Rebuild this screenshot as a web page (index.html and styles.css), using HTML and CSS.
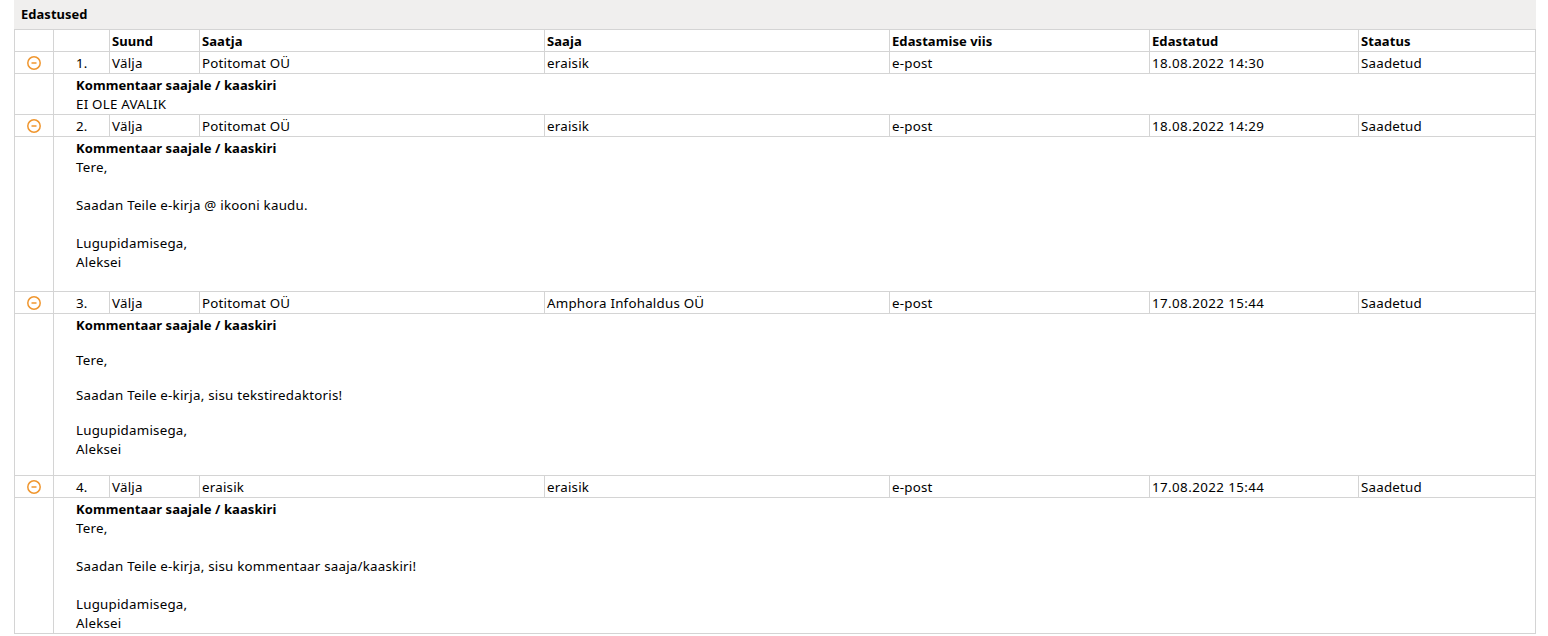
FILE: index.html
```html
<!DOCTYPE html>
<html lang="et">
<head>
<meta charset="utf-8">
<title>Edastused</title>
<link rel="stylesheet" href="styles.css">
</head>
<body>
<section class="panel">
<h2 class="panel-title">Edastused</h2>
<table class="grid">
<colgroup>
<col class="c-icon"><col class="c-num"><col class="c-dir"><col class="c-from"><col class="c-to"><col class="c-via"><col class="c-date"><col class="c-status">
</colgroup>
<thead>
<tr class="row"><th></th><th></th><th>Suund</th><th>Saatja</th><th>Saaja</th><th>Edastamise viis</th><th>Edastatud</th><th>Staatus</th></tr>
</thead>
<tbody>
<tr class="row">
<td class="icon"><svg class="minus" viewBox="0 0 14 14" width="14" height="14"><circle cx="7" cy="7" r="6.2"/><path d="M4.5 7h5"/></svg></td>
<td class="num">1.</td><td>Välja</td><td>Potitomat OÜ</td><td>eraisik</td><td>e-post</td><td class="date">18.08.2022 14:30</td><td>Saadetud</td>
</tr>
<tr class="detail"><td></td><td class="body" colspan="7"><b>Kommentaar saajale / kaaskiri</b><br>EI OLE AVALIK</td></tr>
<tr class="row">
<td class="icon"><svg class="minus" viewBox="0 0 14 14" width="14" height="14"><circle cx="7" cy="7" r="6.2"/><path d="M4.5 7h5"/></svg></td>
<td class="num">2.</td><td>Välja</td><td>Potitomat OÜ</td><td>eraisik</td><td>e-post</td><td class="date">18.08.2022 14:29</td><td>Saadetud</td>
</tr>
<tr class="detail"><td></td><td class="body" colspan="7"><b>Kommentaar saajale / kaaskiri</b><br>Tere,<br><br>Saadan Teile e-kirja @ ikooni kaudu.<br><br>Lugupidamisega,<br>Aleksei<br><br></td></tr>
<tr class="row">
<td class="icon"><svg class="minus" viewBox="0 0 14 14" width="14" height="14"><circle cx="7" cy="7" r="6.2"/><path d="M4.5 7h5"/></svg></td>
<td class="num">3.</td><td>Välja</td><td>Potitomat OÜ</td><td>Amphora Infohaldus OÜ</td><td>e-post</td><td class="date">17.08.2022 15:44</td><td>Saadetud</td>
</tr>
<tr class="detail"><td></td><td class="body" colspan="7"><b>Kommentaar saajale / kaaskiri</b><p>Tere,</p><p>Saadan Teile e-kirja, sisu tekstiredaktoris!</p><p>Lugupidamisega,<br>Aleksei</p></td></tr>
<tr class="row">
<td class="icon"><svg class="minus" viewBox="0 0 14 14" width="14" height="14"><circle cx="7" cy="7" r="6.2"/><path d="M4.5 7h5"/></svg></td>
<td class="num">4.</td><td>Välja</td><td>eraisik</td><td>eraisik</td><td>e-post</td><td class="date">17.08.2022 15:44</td><td>Saadetud</td>
</tr>
<tr class="detail"><td></td><td class="body" colspan="7"><b>Kommentaar saajale / kaaskiri</b><br>Tere,<br><br>Saadan Teile e-kirja, sisu kommentaar saaja/kaaskiri!<br><br>Lugupidamisega,<br>Aleksei</td></tr>
</tbody>
</table>
</section>
</body>
</html>
```
FILE: styles.css
```css
html, body { margin: 0; padding: 0; background: #fff; }
body {
  font-family: "Noto Sans", "Open Sans", sans-serif;
  font-size: 13.33px;
  line-height: 19px;
  letter-spacing: 0.22px;
  color: #000;
  overflow: hidden;
}
b, th, .panel-title { letter-spacing: 0.08px; }
.panel { margin: 0 12px 0 14px; }
.panel-title {
  margin: 0;
  height: 29px;
  padding: 5px 0 0 7px;
  box-sizing: border-box;
  background: #f0efee;
  font-size: 12.9px;
  font-weight: 700;
  line-height: 19px;
}
.grid {
  border-collapse: collapse;
  table-layout: fixed;
  width: 1521px;
}
.c-icon { width: 39px; }
.c-num { width: 56px; }
.c-dir { width: 90px; }
.c-from { width: 345px; }
.c-to { width: 345px; }
.c-via { width: 260px; }
.c-date { width: 209px; }
.c-status { width: 177px; }
.grid th, .grid td {
  border: 1px solid #d4d4d4;
  padding: 0 0 0 2px;
  text-align: left;
  vertical-align: middle;
  white-space: nowrap;
}
.grid th { font-weight: 700; font-size: 13px; }
b { font-size: 13px; }
.row th, .row td { height: 22px; padding-top: 2px; box-sizing: border-box; }
.grid .icon { padding: 1px 0 0; text-align: center; line-height: 0; }
.grid .num { padding-left: 22px; }
.grid .date { letter-spacing: 0.42px; }
.detail td { vertical-align: top; }
.grid .body { padding: 2px 0 0 22px; }
.body p { margin: 16px 0; }
.minus { fill: none; stroke: #f0962e; stroke-width: 1.5; }
```
